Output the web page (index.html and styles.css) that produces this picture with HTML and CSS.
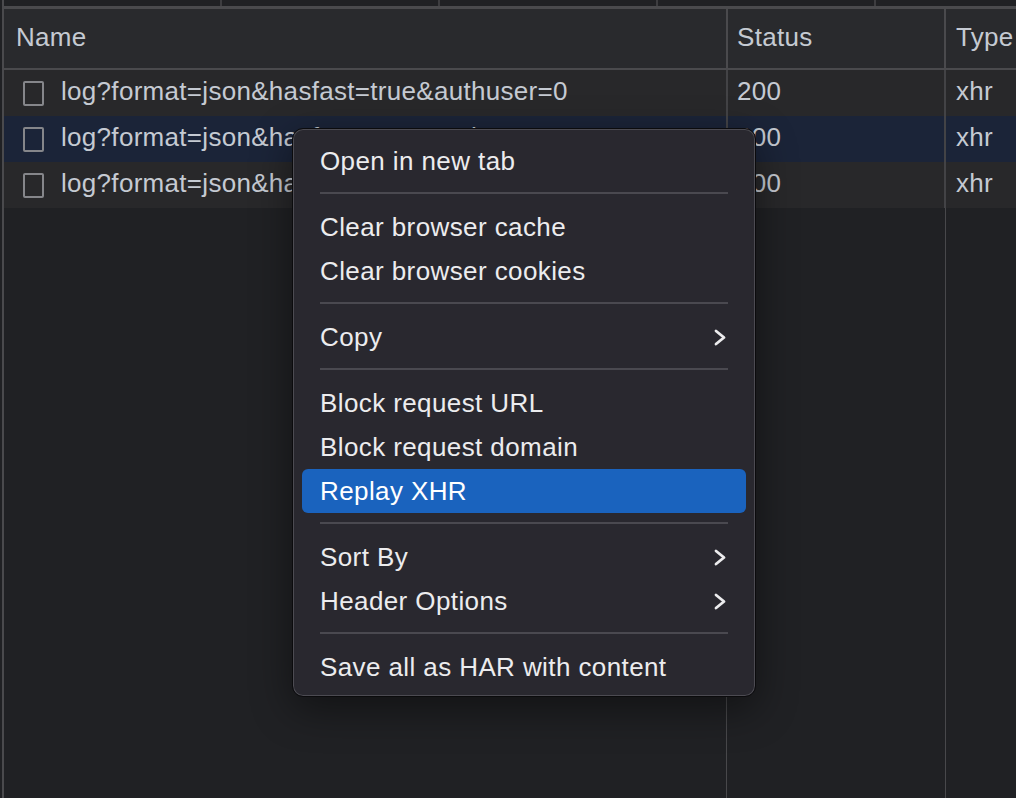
FILE: index.html
```html
<!DOCTYPE html>
<html lang="en">
<head>
<meta charset="utf-8">
<title>Network</title>
<link rel="stylesheet" href="styles.css">
</head>
<body>
<div class="panel">
  <div class="strip">
    <div class="seg"></div><div class="seg"></div><div class="seg"></div><div class="seg"></div><div class="seg last"></div>
  </div>
  <div class="table">
    <div class="row head">
      <div class="cell c-name">Name</div>
      <div class="cell c-status">Status</div>
      <div class="cell c-type">Type</div>
    </div>
    <div class="row data">
      <div class="cell c-name"><span class="doc"></span>log?format=json&amp;hasfast=true&amp;authuser=0</div>
      <div class="cell c-status">200</div>
      <div class="cell c-type">xhr</div>
    </div>
    <div class="row data selected">
      <div class="cell c-name"><span class="doc"></span>log?format=json&amp;hasfast=true&amp;authuser=0</div>
      <div class="cell c-status">200</div>
      <div class="cell c-type">xhr</div>
    </div>
    <div class="row data">
      <div class="cell c-name"><span class="doc"></span>log?format=json&amp;hasfast=true&amp;authuser=0</div>
      <div class="cell c-status">200</div>
      <div class="cell c-type">xhr</div>
    </div>
    <div class="row filler">
      <div class="cell c-name"></div>
      <div class="cell c-status"></div>
      <div class="cell c-type"></div>
    </div>
  </div>
</div>

<div class="menu">
  <div class="item">Open in new tab</div>
  <div class="sep"></div>
  <div class="item">Clear browser cache</div>
  <div class="item">Clear browser cookies</div>
  <div class="sep"></div>
  <div class="item sub">Copy<svg class="chev" viewBox="0 0 12 17" width="12" height="17"><polyline points="2,2 10,8.5 2,15"/></svg></div>
  <div class="sep"></div>
  <div class="item">Block request URL</div>
  <div class="item">Block request domain</div>
  <div class="item active">Replay XHR</div>
  <div class="sep"></div>
  <div class="item sub">Sort By<svg class="chev" viewBox="0 0 12 17" width="12" height="17"><polyline points="2,2 10,8.5 2,15"/></svg></div>
  <div class="item sub">Header Options<svg class="chev" viewBox="0 0 12 17" width="12" height="17"><polyline points="2,2 10,8.5 2,15"/></svg></div>
  <div class="sep"></div>
  <div class="item">Save all as HAR with content</div>
</div>
</body>
</html>
```

FILE: styles.css
```css
html, body {
  margin: 0;
  padding: 0;
  height: 100%;
  background: #202124;
  font-family: "Liberation Sans", Arial, sans-serif;
  overflow: hidden;
}

.panel {
  height: 798px;
  margin-left: 2px;
  border-left: 2px solid #4a4a4d;
  display: flex;
  flex-direction: column;
}

.strip {
  height: 6px;
  display: flex;
  border-bottom: 3px solid #4a4a4d;
  background: #202124;
}

.seg {
  width: 216px;
  height: 100%;
  border-right: 2px solid #3d3d40;
}
.seg.last { flex: 1; border-right: 0; }

.table {
  flex: 1;
  display: flex;
  flex-direction: column;
}

.row {
  display: flex;
  font-size: 26px;
  letter-spacing: 0.3px;
  color: #c5cad2;
}

.cell {
  box-sizing: border-box;
  white-space: nowrap;
  overflow: hidden;
  display: flex;
  align-items: center;
}

.c-name { width: 722px; padding-left: 12px; }
.c-status { width: 218px; padding-left: 9px; border-left: 2px solid #434346; }
.c-type { flex: 1; padding-left: 10px; border-left: 2px solid #434346; }

.head {
  height: 59px;
  background: #292a2d;
  border-bottom: 2px solid #4a4a4d;
}
.head .cell { padding-bottom: 3px; }
.head .c-status, .head .c-type { border-left-color: #4a4a4d; }

.data {
  height: 46px;
  background: #28282a;
}
.data .cell { padding-bottom: 3px; }
.data.selected { background: #1b2438; }

.data .c-name { padding-left: 19px; }

.doc {
  display: inline-block;
  box-sizing: border-box;
  width: 21px;
  height: 25px;
  border: 2px solid #85868a;
  border-radius: 2px;
  margin-right: 17px;
  margin-top: 3px;
  flex: none;
}

.filler {
  flex: 1;
  background: #202124;
}
.filler .c-status, .filler .c-type { border-left: 1px solid #48484b; }
.filler .c-type { margin-left: 1px; }

.menu {
  position: absolute;
  left: 292px;
  top: 128px;
  width: 464px;
  box-sizing: border-box;
  padding: 10px 9px 7px;
  background: #29282f;
  border: 1px solid #0b0b0d;
  border-radius: 11px;
  box-shadow: inset 0 0 0 1px #4c4b52, 0 12px 40px rgba(0, 0, 0, 0.45);
  color: #ececee;
  font-size: 26px;
  letter-spacing: 0.4px;
}

.item {
  height: 44px;
  line-height: 44px;
  padding: 0 20px 0 18px;
  display: flex;
  align-items: center;
  justify-content: space-between;
  border-radius: 6px;
  white-space: nowrap;
}

.item.active {
  background: #1a63be;
  color: #ffffff;
}

.sep {
  height: 2px;
  background: #4a4950;
  margin: 9px 18px 11px;
}

.chev {
  flex: none;
  fill: none;
  stroke: #ececee;
  stroke-width: 2.8;
  stroke-linecap: round;
  stroke-linejoin: round;
}
```
